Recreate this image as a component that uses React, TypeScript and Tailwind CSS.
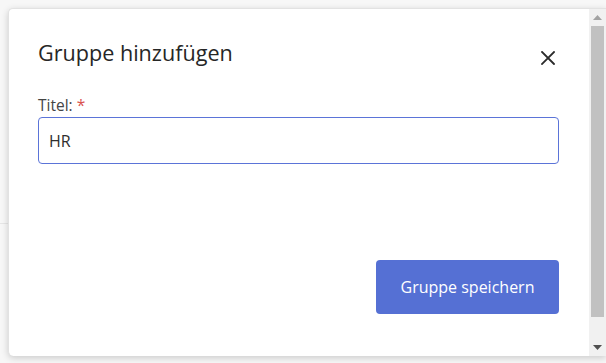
import React from "react";

const CloseIcon = () => (
  <svg width="14" height="14" viewBox="0 0 14 14" className="block">
    <path d="M1 1L13 13M13 1L1 13" stroke="#2b2b2b" strokeWidth="1.8" strokeLinecap="square" />
  </svg>
);

const Scrollbar = () => {
  return (
    <div className="w-[17px] h-full bg-[#f1f1f1] flex flex-col shrink-0">
      <div className="h-[17px] flex items-center justify-center">
        <svg width="9" height="5" viewBox="0 0 9 5">
          <path d="M0 5L4.5 0L9 5Z" fill="#a3a3a3" />
        </svg>
      </div>
      <div className="flex-1 flex flex-col px-[2px]">
        <div className="h-[291px] bg-[#c1c1c1]"></div>
      </div>
      <div className="h-[17px] flex items-center justify-center">
        <svg width="9" height="5" viewBox="0 0 9 5">
          <path d="M0 0L4.5 5L9 0Z" fill="#505050" />
        </svg>
      </div>
    </div>
  );
};

export default function App() {
  return (
    <div
      className="relative w-[606px] h-[363px] overflow-hidden bg-[#f7f7f7] pl-2 pt-2"
      style={{ fontFamily: '"Open Sans", "Noto Sans", sans-serif' }}
    >
      <div className="absolute left-0 top-[223px] w-2 h-px bg-[#e6e6e6]"></div>
      <div className="relative h-[348px] bg-white rounded-l-[5px] border-t border-l border-[#e2e2e2] shadow-[0_2px_7px_rgba(0,0,0,0.18)] flex">
        <div className="flex-1 flex flex-col pl-[29px] pr-[30px] pt-[29px]">
          <div className="flex items-start justify-between">
            <h2 className="text-[21.6px] leading-[30px] text-[#262626]">Gruppe hinzufügen</h2>
            <button className="mt-[13px] mr-[4px]">
              <CloseIcon />
            </button>
          </div>
          <label className="mt-[27px] text-[15.5px] leading-[21px] text-[#444]">
            Titel: <span className="text-[#d9534f]">*</span>
          </label>
          <input
            className="mt-[1px] h-[47px] w-full rounded-[4px] border border-[#5b74d8] px-[10px] text-[16px] text-[#2e2e2e] outline-none"
            defaultValue="HR"
          />
          <div className="mt-[96px] flex justify-end">
            <button className="w-[183px] h-[54px] rounded-[4px] bg-[#5570d4] text-white text-[16px]">
              Gruppe speichern
            </button>
          </div>
        </div>
        <Scrollbar />
      </div>
    </div>
  );
}
